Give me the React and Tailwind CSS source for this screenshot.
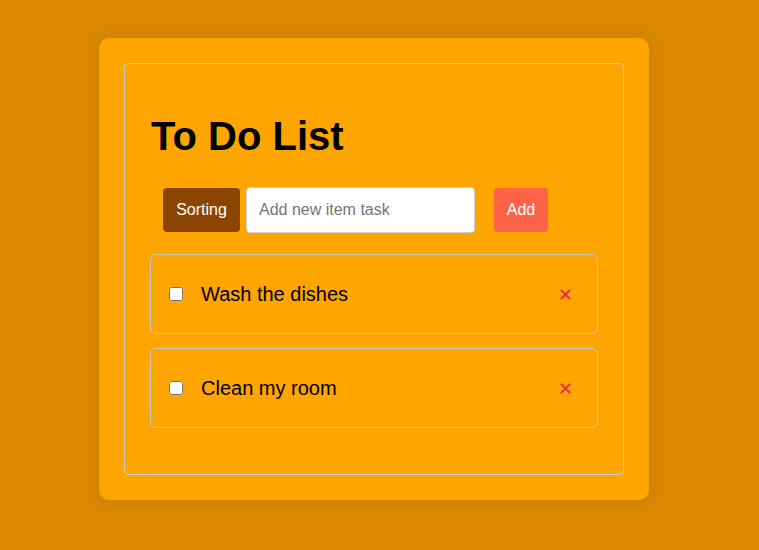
import { useState } from 'react';

function CloseIcon() {
    return (
        <svg width="11" height="11" viewBox="0 0 11 11" className="text-[#dc3a3f]">
            <path d="M1.5 1.5 L9.5 9.5 M9.5 1.5 L1.5 9.5" stroke="currentColor" strokeWidth="2.2" strokeLinecap="round" />
        </svg>
    );
}

function TodoItem({ text }) {
    return (
        <div className="flex items-center h-[80px] border border-[#c9c9c9] rounded-[6px] pl-[18px] pr-[26px]">
            <input type="checkbox" className="w-[14px] h-[14px] m-0" />
            <span className="ml-[18px] text-[20px] text-black flex-1">{text}</span>
            <button className="flex items-center justify-center">
                <CloseIcon />
            </button>
        </div>
    );
}

export default function App() {
    const [items] = useState(['Wash the dishes', 'Clean my room']);

    return (
        <div className="min-h-[550px] bg-[#d98800] pt-[38px] pl-[99px] font-['Liberation_Sans',Arial,sans-serif]">
            <div className="w-[550px] h-[462px] bg-[#ffa500] rounded-[10px] p-[25px] shadow-[0_0_18px_rgba(0,0,0,0.08)]">
                <div className="h-[412px] border border-[#cccccc] rounded-[4px] px-[25px]">
                    <h1 className="mt-[48px] ml-[1px] text-[40px] font-bold text-black leading-[48px]">To Do List</h1>
                    <div className="flex items-center mt-[27px] ml-[13px]">
                        <button className="w-[77px] h-[44px] bg-[#8b4500] text-white text-[16px] rounded-[4px]">
                            Sorting
                        </button>
                        <input
                            type="text"
                            placeholder="Add new item task"
                            className="ml-[6px] w-[229px] h-[46px] bg-white border border-[#cfcfcf] rounded-[4px] px-[12px] text-[16px] placeholder:text-[#757575] outline-none"
                        />
                        <button className="ml-[19px] w-[54px] h-[44px] bg-[#ff6347] text-white text-[16px] rounded-[4px]">
                            Add
                        </button>
                    </div>
                    <div className="mt-[21px] flex flex-col gap-[14px]">
                        {items.map((t) => (
                            <TodoItem key={t} text={t} />
                        ))}
                    </div>
                </div>
            </div>
        </div>
    );
}
